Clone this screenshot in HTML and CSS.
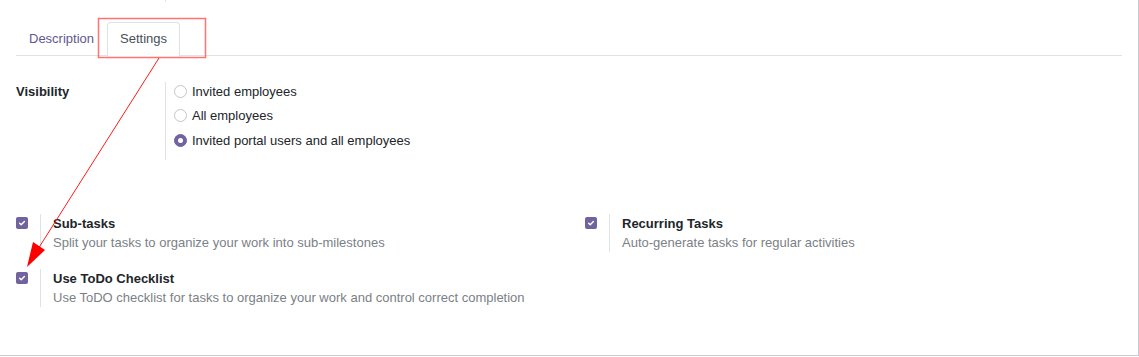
FILE: index.html
```html
<!DOCTYPE html>
<html>
<head>
<meta charset="utf-8">
<link rel="stylesheet" href="styles.css">
</head>
<body>
<div class="sheet">
  <div class="top-stub"></div>
  <nav class="tabs">
    <a class="tab">Description</a>
    <a class="tab active">Settings</a>
  </nav>
  <div class="visibility">
    <div class="vis-label">Visibility</div>
    <div class="vis-options">
      <label class="radio"><span class="radio-dot"></span>Invited employees</label>
      <label class="radio"><span class="radio-dot"></span>All employees</label>
      <label class="radio"><span class="radio-dot checked"></span>Invited portal users and all employees</label>
    </div>
  </div>
  <div class="features">
    <div class="feature">
      <span class="check"><svg viewBox="0 0 12 12" width="12" height="12"><path d="M3.6 6.2 L5.2 7.7 L8.4 4.4" fill="none" stroke="#fff" stroke-width="1.4" stroke-linecap="round" stroke-linejoin="round"/></svg></span>
      <div class="feature-body">
        <div class="feature-title">Sub-tasks</div>
        <div class="feature-desc">Split your tasks to organize your work into sub-milestones</div>
      </div>
    </div>
    <div class="feature">
      <span class="check"><svg viewBox="0 0 12 12" width="12" height="12"><path d="M3.6 6.2 L5.2 7.7 L8.4 4.4" fill="none" stroke="#fff" stroke-width="1.4" stroke-linecap="round" stroke-linejoin="round"/></svg></span>
      <div class="feature-body">
        <div class="feature-title">Recurring Tasks</div>
        <div class="feature-desc">Auto-generate tasks for regular activities</div>
      </div>
    </div>
    <div class="feature">
      <span class="check"><svg viewBox="0 0 12 12" width="12" height="12"><path d="M3.6 6.2 L5.2 7.7 L8.4 4.4" fill="none" stroke="#fff" stroke-width="1.4" stroke-linecap="round" stroke-linejoin="round"/></svg></span>
      <div class="feature-body">
        <div class="feature-title">Use ToDo Checklist</div>
        <div class="feature-desc">Use ToDO checklist for tasks to organize your work and control correct completion</div>
      </div>
    </div>
  </div>
  <svg class="annotation" width="1139" height="357" viewBox="0 0 1139 357">
    <rect x="98.5" y="18.5" width="107" height="39" fill="none" stroke="#ff5a5a" stroke-opacity="0.85" stroke-width="1.5"/>
    <line x1="159" y1="58" x2="38" y2="249" stroke="#ff1a1a" stroke-width="1"/>
    <polygon points="27,267 33,242 45,250" fill="#ff0000"/>
  </svg>
</div>
</body>
</html>
```

FILE: styles.css
```css
* { box-sizing: border-box; }
html, body { margin: 0; padding: 0; background: #fff; }
body {
  font-family: "Liberation Sans", Arial, sans-serif;
  font-size: 13px;
  color: #212529;
}
.sheet {
  position: relative;
  width: 1139px;
  height: 356px;
  border-right: 1px solid #c9c9d1;
  border-bottom: 1px solid #c9c9d1;
  padding: 0 16px;
  overflow: hidden;
}
.top-stub {
  width: 1px;
  height: 2px;
  background: #dee2e6;
  margin-left: 149px;
}
.tabs {
  display: flex;
  margin-top: 20px;
  border-bottom: 1px solid #dee2e6;
  height: 34px;
}
.tab {
  display: block;
  height: 34px;
  line-height: 32px;
  padding: 0 12px;
  color: #5f5790;
  border: 1px solid transparent;
  border-radius: 4px 4px 0 0;
}
.tab.active {
  color: #495057;
  border-color: #dee2e6 #dee2e6 #fff;
  background: #fff;
  padding: 0 12px;
  height: 35px;
}
.visibility {
  display: flex;
  margin-top: 26px;
}
.vis-label {
  width: 149px;
  font-weight: bold;
  line-height: 18px;
  padding-top: 1px;
  color: #212529;
}
.vis-options {
  border-left: 1px solid #dee2e6;
  padding: 0 0 11px 8px;
  display: flex;
  flex-direction: column;
  gap: 6.5px;
}
.radio {
  display: flex;
  align-items: center;
  height: 18px;
  color: #212529;
}
.radio-dot {
  width: 13px;
  height: 13px;
  border-radius: 50%;
  border: 1px solid #c3c7cc;
  margin-right: 5px;
  flex: none;
}
.radio-dot.checked {
  background: #71639e;
  border-color: #71639e;
  display: flex;
  align-items: center;
  justify-content: center;
}
.radio-dot.checked::after {
  content: "";
  width: 5px;
  height: 5px;
  border-radius: 50%;
  background: #fff;
}
.features {
  display: grid;
  grid-template-columns: 569px 1fr;
  row-gap: 17px;
  margin-top: 54px;
}
.feature {
  display: flex;
  align-items: flex-start;
}
.check {
  width: 12px;
  height: 12px;
  margin-top: 3px;
  border-radius: 2px;
  background: #71639e;
  display: block;
  flex: none;
}
.check svg { display: block; }
.feature-body {
  margin-left: 12px;
  border-left: 1px solid #dee2e6;
  padding-left: 12px;
  padding-top: 1px;
  height: 38px;
}
.feature-title {
  font-weight: bold;
  line-height: 18px;
  color: #212529;
}
.feature-desc {
  color: #7b7f86;
  line-height: 20px;
}
.annotation {
  position: absolute;
  left: 0;
  top: 0;
  pointer-events: none;
}
```
